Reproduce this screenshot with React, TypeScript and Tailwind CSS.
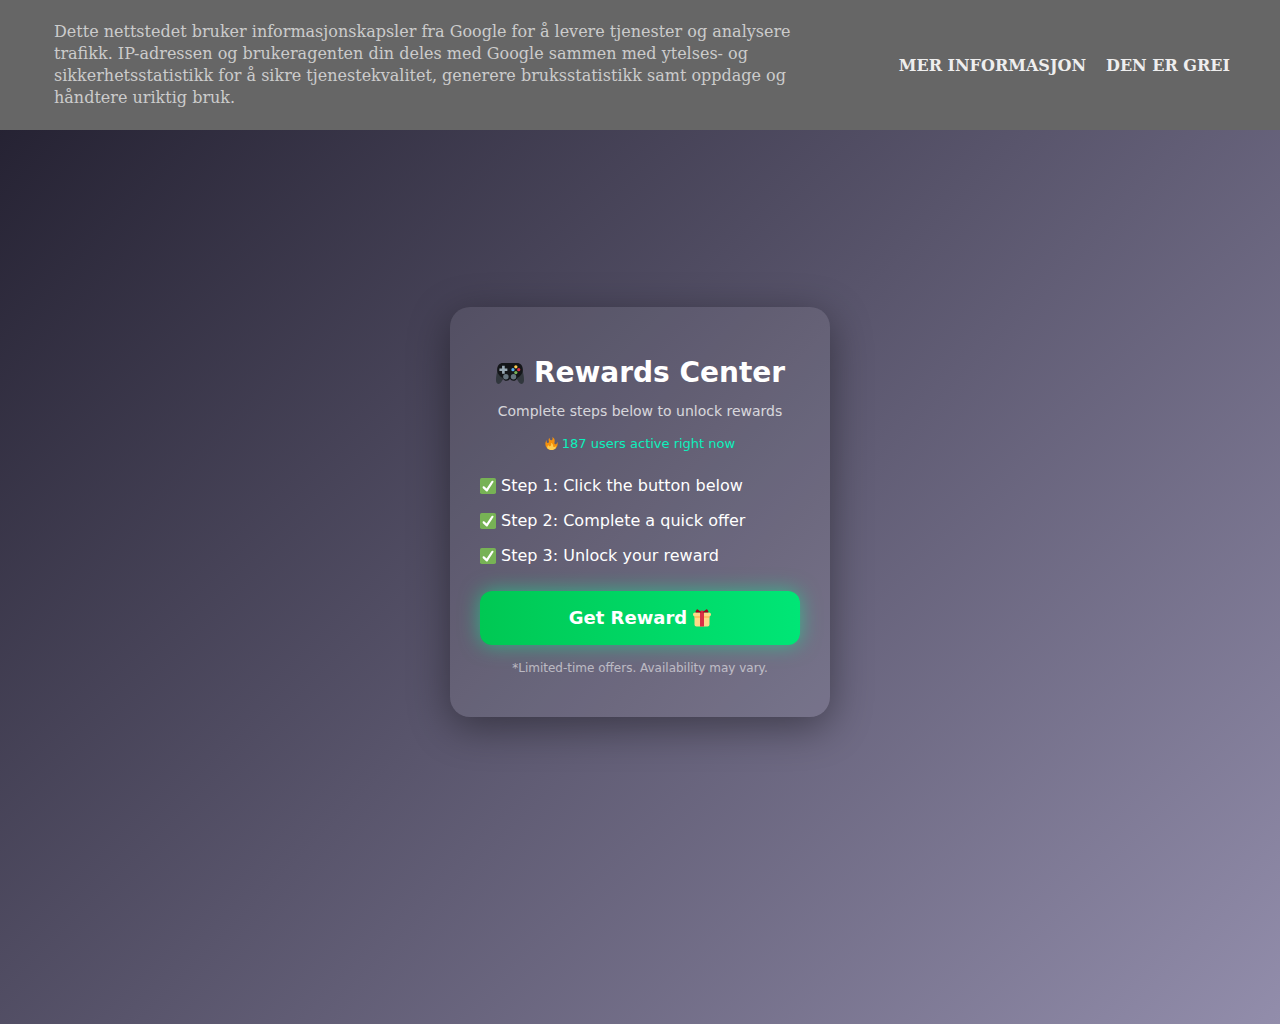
import type { ReactNode } from "react";

const steps = [
  "Step 1: Click the button below",
  "Step 2: Complete a quick offer",
  "Step 3: Unlock your reward",
];

interface EmojiProps {
  label: string;
  className: string;
  children: ReactNode;
}

function Emoji({ label, className, children }: EmojiProps) {
  return (
    <svg viewBox="0 0 36 36" role="img" aria-label={label} className={`inline-block shrink-0 ${className}`}>
      {children}
    </svg>
  );
}

function Gamepad() {
  return (
    <Emoji label="Game controller" className="mx-px size-7">
      {/* grips */}
      <path
        fill="#31373D"
        d="M2.5 13C1 17 0 23 0 27c0 3 1 5 3 5 3 0 4-3 6-6l2-4h14l2 4c2 3 3 6 6 6 2 0 3-2 3-5 0-4-1-10-2.5-14z"
      />
      <path
        fill="#141619"
        d="M9 5h18c4.5 0 7.5 3.5 7.5 8.5 0 5-3 9-7 10.500-.8 2.500-2.700 4-5.200 4-2 0-3.300-1-4.300-2.500C17 27 15.700 28 13.700 28c-2.500 0-4.400-1.500-5.200-4-4-1.500-7-5.500-7-10.500C1.500 8.500 4.500 5 9 5z"
      />
      <path fill="#99AAB5" d="M7.800 8.700h3.400v3.400h3.400v3.400h-3.400v3.400H7.800v-3.400H4.400v-3.400h3.400z" />
      <circle cx="12.7" cy="22.7" r="3.5" fill="#66757F" />
      <circle cx="22.5" cy="22.7" r="3.5" fill="#66757F" />
      <circle cx="25.5" cy="10" r="2.1" fill="#FFCC4D" />
      <circle cx="29.2" cy="13.7" r="2.1" fill="#DD2E44" />
      <circle cx="21.8" cy="13.7" r="2.1" fill="#55ACEE" />
      <circle cx="25.5" cy="17.4" r="2.1" fill="#77B255" />
    </Emoji>
  );
}

function Fire() {
  return (
    <Emoji label="Fire" className="size-[13px]">
      <path
        fill="#F4900C"
        d="M35 19c0-2.062-.367-4.039-1.04-5.868-.46 5.389-3.333 8.157-6.335 6.868-2.812-1.208-.917-5.917-.777-8.164.236-3.809-.012-8.169-6.931-11.794 2.875 5.5.333 8.917-2.333 9.125-2.958.231-5.667-2.542-4.667-7.042-3.238 2.386-3.332 6.402-2.333 9 1.042 2.708-.042 4.958-2.583 5.208-2.84.28-4.418-3.041-2.963-8.333C2.52 10.965 1 14.805 1 19c0 9.389 7.611 17 17 17s17-7.611 17-17z"
      />
      <path
        fill="#FFCC4D"
        d="M28.394 23.999c.148 3.084-2.561 4.293-4.019 3.709-2.106-.843-1.541-2.291-2.083-5.291s-2.625-5.083-5.708-6c2.25 6.333-1.247 8.667-3.08 9.084-1.872.426-3.753-.001-3.968-4.007C7.352 23.668 6 26.676 6 30c0 .368.023.73.055 1.09C9.125 34.124 13.342 36 18 36s8.875-1.876 11.945-4.91c.032-.36.055-.722.055-1.09 0-2.187-.584-4.236-1.606-6.001z"
      />
    </Emoji>
  );
}

function Check() {
  return (
    <Emoji label="Check" className="size-4">
      <rect width="36" height="36" rx="4" fill="#77B255" />
      <path
        fill="#FFF"
        d="M29.28 6.362c-1.156-.751-2.704-.422-3.458.736L14.936 23.877l-5.029-4.65c-1.014-.938-2.596-.875-3.533.138-.937 1.014-.875 2.596.139 3.533l7.209 6.666c.48.445 1.09.665 1.696.665.673 0 1.534-.282 2.099-1.139.332-.506 12.5-19.27 12.5-19.27.751-1.159.421-2.707-.737-3.458z"
      />
    </Emoji>
  );
}

function Gift() {
  return (
    <Emoji label="Gift" className="size-[18px]">
      <path fill="#FDD888" d="M33 31c0 2.2-1.8 4-4 4H7c-2.2 0-4-1.8-4-4V14c0-2.2 1.8-4 4-4h22c2.2 0 4 1.8 4 4z" />
      <path fill="#FDD888" d="M36 11c0 2.2-1.8 4-4 4H4c-2.2 0-4-1.8-4-4s1.8-4 4-4h28c2.2 0 4 1.8 4 4z" />
      <path fill="#FCAB40" d="M3 15h30v2H3z" />
      <path fill="#DA2F47" d="M19 3h-2a3 3 0 0 0-3 3v29h8V6a3 3 0 0 0-3-3z" />
      <path
        fill="#A0041E"
        d="M16 7c1.1 0 1.263-.516.361-1.147L9.639 1.147a1.795 1.795 0 0 0-2.631.589L4.992 5.264C4.446 6.219 4.9 7 6 7zM20 7c-1.1 0-1.263-.516-.361-1.147l6.723-4.706a1.796 1.796 0 0 1 2.631.589l2.016 3.527C31.554 6.219 31.1 7 30 7z"
      />
    </Emoji>
  );
}

function CookieBar() {
  return (
    <header className="absolute inset-x-0 top-0 flex items-center justify-between bg-[#666666] py-[21px] pr-10 pl-[54px] font-['DejaVu_Serif',serif] text-base">
      <p className="max-w-[745px] leading-[22px] text-[#cccccc]">
        Dette nettstedet bruker informasjonskapsler fra Google for å levere tjenester og analysere
        trafikk. IP-adressen og brukeragenten din deles med Google sammen med ytelses- og
        sikkerhetsstatistikk for å sikre tjenestekvalitet, generere bruksstatistikk samt oppdage og
        håndtere uriktig bruk.
      </p>
      <nav className="flex shrink-0 leading-[25px] font-bold text-[#eeeeee] uppercase">
        <a href="#info" className="px-[10px]">
          Mer informasjon
        </a>
        <a href="#ok" className="px-[10px]">
          Den er grei
        </a>
      </nav>
    </header>
  );
}

export default function App() {
  return (
    <div className="relative flex min-h-screen items-center justify-center bg-linear-[135deg,#1f1c2c,#928dab] font-['DejaVu_Sans',sans-serif] text-white">
      <CookieBar />
      <main className="w-full max-w-[380px] rounded-[20px] bg-white/8 px-[30px] pt-12 pb-[42px] text-center shadow-[0_10px_40px_rgba(0,0,0,0.4)]">
        <h1 className="flex items-center justify-center gap-[9px] text-[28px] leading-[35px] font-bold">
          <Gamepad />
          Rewards Center
        </h1>
        <p className="mt-[13px] text-sm leading-4 opacity-75">Complete steps below to unlock rewards</p>
        <p className="mt-4 flex items-center justify-center gap-1 text-[13px] leading-[17px] text-[#0cf0bc]">
          <Fire />
          187 users active right now
        </p>
        <ul className="mt-6 flex flex-col gap-[15px] text-left leading-5">
          {steps.map((step) => (
            <li key={step} className="flex items-center gap-[5px]">
              <Check />
              {step}
            </li>
          ))}
        </ul>
        <button
          type="button"
          className="mt-[25px] flex h-[54px] w-full cursor-pointer items-center justify-center gap-[6px] rounded-xl bg-linear-90 from-[#00c853] to-[#00e676] text-lg font-bold shadow-[0_0_20px_rgba(0,255,150,0.5)]"
        >
          Get Reward
          <Gift />
        </button>
        <p className="mt-4 text-xs leading-[14px] opacity-55">*Limited-time offers. Availability may vary.</p>
      </main>
    </div>
  );
}
